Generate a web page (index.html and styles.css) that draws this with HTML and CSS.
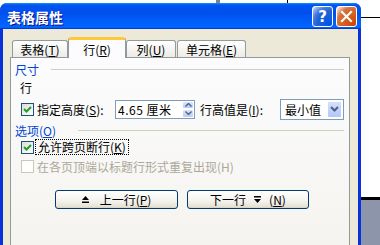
FILE: index.html
```html
<!DOCTYPE html>
<html lang="zh-CN">
<head>
    <meta charset="UTF-8">
    <title>表格属性</title>
    <link rel="stylesheet" href="styles.css">
</head>
<body>
    <div class="desk">
        <div class="desk-tick t1"></div>
        <div class="desk-tick t2"></div>
        <div class="desk-line"></div>
        <div class="desk-bottom"></div>

        <div class="window">
            <div class="titlebar">
                <span class="title">表格属性</span>
                <div class="tb-buttons">
                    <span class="tb-btn help">?</span>
                    <span class="tb-btn close">
                        <svg width="13" height="13" viewBox="0 0 13 13"><path d="M2 2 L11 11 M11 2 L2 11" stroke="#fff" stroke-width="2.2" stroke-linecap="square"/></svg>
                    </span>
                </div>
            </div>
            <div class="client">
                <div class="tabs">
                    <div class="tab w-a">表格(<u>T</u>)</div>
                    <div class="tab active">行(<u>R</u>)</div>
                    <div class="tab w-c">列(<u>U</u>)</div>
                    <div class="tab w-d">单元格(<u>E</u>)</div>
                </div>
                <div class="page">
                    <div class="group-title"><span>尺寸</span><i class="sep"></i></div>
                    <div class="row row-label">行</div>
                    <div class="row">
                        <span class="chk">
                            <svg width="11" height="11" viewBox="0 0 11 11"><path d="M2 5 L4.5 7.5 L9 3" stroke="#21a121" stroke-width="2" fill="none"/></svg>
                        </span>
                        <span class="lbl lbl-1">指定高度(<u>S</u>):</span>
                        <span class="spin">
                            <span class="val">4.65 厘米</span>
                            <span class="spin-btns">
                                <b><svg width="7" height="4" viewBox="0 0 7 4"><path d="M0.5 3.5 L3.5 0.5 L6.5 3.5" stroke="#4d6185" stroke-width="1.4" fill="none"/></svg></b>
                                <b><svg width="7" height="4" viewBox="0 0 7 4"><path d="M0.5 0.5 L3.5 3.5 L6.5 0.5" stroke="#4d6185" stroke-width="1.4" fill="none"/></svg></b>
                            </span>
                        </span>
                        <span class="lbl lbl-2">行高值是(<u>I</u>):</span>
                        <span class="select">
                            <span class="val">最小值</span>
                            <span class="drop">
                                <svg width="9" height="6" viewBox="0 0 9 6"><path d="M1 1 L4.5 4.5 L8 1" stroke="#4d6185" stroke-width="2" fill="none"/></svg>
                            </span>
                        </span>
                    </div>
                    <div class="group-title group-2"><span>选项(<u>O</u>)</span><i class="sep sep-wide"></i></div>
                    <div class="row row-check">
                        <span class="chk">
                            <svg width="11" height="11" viewBox="0 0 11 11"><path d="M2 5 L4.5 7.5 L9 3" stroke="#21a121" stroke-width="2" fill="none"/></svg>
                        </span>
                        <span class="focus">允许跨页断行(<u>K</u>)</span>
                    </div>
                    <div class="row row-off">
                        <span class="chk chk-off"></span>
                        <span class="lbl">在各页顶端以标题行形式重复出现(H)</span>
                    </div>
                    <div class="btn-row">
                        <button class="btn btn-prev">
                            <svg width="7" height="7" viewBox="0 0 7 7"><path d="M3.5 0 L7 4 L0 4 Z M0 5.5 H7 V7 H0 Z" fill="#000"/></svg>
                            <span>上一行(<u>P</u>)</span>
                        </button>
                        <button class="btn btn-next">
                            <span>下一行</span>
                            <svg width="7" height="7" viewBox="0 0 7 7"><path d="M0 0 H7 V1.5 H0 Z M0 3 L7 3 L3.5 7 Z" fill="#000"/></svg>
                            <span>(<u>N</u>)</span>
                        </button>
                    </div>
                </div>
            </div>
        </div>
    </div>
</body>
</html>
```

FILE: styles.css
```css
body{
    margin: 0;
    font-family: "Noto Sans CJK SC", "DejaVu Sans", sans-serif;
    font-size: 12px;
    color: #000;
}
.desk{
    width: 380px;
    height: 245px;
    position: relative;
    overflow: hidden;
    background-color: #fff;
}
/* 桌面上露出的其它窗口的边 */
.desk-tick{
    position: absolute;
    top: 0;
    height: 3px;
}
.t1{
    left: 216px;
    width: 4px;
    background-color: #7d8290;
}
.t2{
    left: 287px;
    width: 1px;
    background-color: #000;
}
.desk-line{
    position: absolute;
    left: 300px;
    right: 0;
    top: 17px;
    height: 1px;
    background-color: #000;
}
.desk-bottom{
    position: absolute;
    left: 0;
    right: 0;
    top: 197px;
    bottom: 0;
    border-top: 3px solid #000;
    background-color: #8d95aa;
}
.window{
    position: absolute;
    left: 0;
    top: 3px;
    width: 361px;
    height: 250px;
    background-color: #0831d9;
    border-radius: 7px 7px 0 0;
    overflow: hidden;
}
.titlebar{
    height: 26px;
    display: flex;
    align-items: center;
    justify-content: space-between;
    padding: 1px 4px 0 7px;
    box-sizing: border-box;
    background: linear-gradient(180deg, #0997ff, #0053ee 8%, #0050ee 40%, #0066ff 88%, #0066ff 93%, #005bff 95%, #003dd7 96%, #003dd7);
}
.title{
    color: #fff;
    font-weight: bold;
    font-size: 14px;
    text-shadow: 1px 1px #0f1089;
}
.tb-buttons{
    display: flex;
    gap: 3px;
}
.tb-btn{
    width: 21px;
    height: 21px;
    box-sizing: border-box;
    border: 1px solid #fff;
    border-radius: 3px;
    display: flex;
    align-items: center;
    justify-content: center;
}
.help{
    background: radial-gradient(circle at 90% 90%, #0054e9, #2263d5 55%, #4479e4 70%, #a3bbec 90%, #fff);
    color: #fff;
    font-family: "DejaVu Sans", sans-serif;
    font-weight: bold;
    font-size: 15px;
}
.close{
    background: radial-gradient(circle at 90% 90%, #cc4600, #dc6527 55%, #cd7546 70%, #ffccb2 90%, #fff);
}
.client{
    margin: 0 3px;
    height: 224px;
    background-color: #ece9d8;
    padding-top: 8px;
    box-sizing: border-box;
}
.tabs{
    display: flex;
    align-items: flex-end;
    height: 20px;
    padding-left: 9px;
}
.tab{
    height: 17px;
    box-sizing: border-box;
    border: 1px solid #919b9c;
    border-bottom: none;
    border-radius: 3px 3px 0 0;
    background: linear-gradient(#fff, #ecebe6);
    display: flex;
    align-items: center;
    justify-content: center;
    padding-top: 1px;
}
.w-a{ width: 56px; }
.w-c{ width: 50px; }
.w-d{ width: 69px; margin-left: 1px; }
.tab.active{
    width: 58px;
    height: 21px;
    margin-bottom: -1px;
    position: relative;
    z-index: 1;
    background: #fcfcfe;
    border-top: 3px solid #ffc83c;
    padding-top: 0;
}
.page{
    margin-left: 7px;
    width: 340px;
    height: 200px;
    box-sizing: border-box;
    border: 1px solid #919b9c;
    background: linear-gradient(#fcfcfe, #f4f3ee);
    padding: 4px 5px 0 4px;
}
.group-title{
    display: flex;
    align-items: center;
    height: 14px;
    color: #0046d5;
}
.group-2{
    margin-top: 3px;
}
.sep{
    flex: 1;
    height: 1px;
    margin-left: 12px;
    background-color: #d0d0bf;
}
.sep-wide{
    margin-left: 22px;
}
.row{
    display: flex;
    align-items: center;
    height: 22px;
    padding-left: 6px;
}
.row-label{
    padding-left: 5px;
}
.row-check{
    height: 16px;
    margin-top: 2px;
}
.row-off{
    color: #aca899;
}
.chk{
    width: 13px;
    height: 13px;
    box-sizing: border-box;
    border: 1px solid #1c5180;
    background: linear-gradient(135deg, #dcdcd7, #fff);
    display: flex;
    align-items: center;
    justify-content: center;
}
.chk-off{
    border-color: #cac8bb;
    background: #fff;
}
.lbl{
    margin-left: 3px;
}
.lbl-1{
    width: 78px;
}
.lbl-2{
    width: 80px;
    margin-left: 5px;
}
.spin,.select{
    height: 19px;
    box-sizing: border-box;
    border: 1px solid #7f9db9;
    background-color: #fff;
    display: flex;
    align-items: center;
}
.spin{
    width: 80px;
}
.spin .val{
    flex: 1;
    padding-left: 2px;
    letter-spacing: 0.5px;
}
.spin-btns{
    width: 12px;
    height: 100%;
    display: flex;
    flex-direction: column;
}
.spin-btns b{
    flex: 1;
    background: linear-gradient(#dbe5fd, #b9cbf7);
    border: 1px solid #fff;
    border-radius: 2px;
    display: flex;
    align-items: center;
    justify-content: center;
}
.select{
    width: 64px;
    height: 21px;
    padding: 1px;
}
.select .val{
    flex: 1;
    padding-left: 3px;
}
.drop{
    width: 15px;
    height: 100%;
    box-sizing: border-box;
    border: 1px solid #fff;
    border-radius: 2px;
    background: linear-gradient(#d4e0fd, #b2c7f7);
    display: flex;
    align-items: center;
    justify-content: center;
}
.focus{
    margin-left: 1px;
    padding: 0 2px;
    border: 1px dotted #000;
    line-height: 14px;
}
.btn-row{
    display: flex;
    gap: 9px;
    margin-top: 13px;
    padding-left: 40px;
}
.btn{
    height: 19px;
    box-sizing: border-box;
    border: 1px solid #003c74;
    border-radius: 3px;
    background: linear-gradient(#fff, #f3f2ec 60%, #e6e3d6 90%, #d6d0c5);
    font-family: inherit;
    font-size: 12px;
    color: #000;
    display: flex;
    align-items: center;
    justify-content: center;
    gap: 8px;
    padding: 0;
}
.btn-prev{
    width: 123px;
    gap: 11px;
}
.btn-next{
    width: 122px;
}
```
